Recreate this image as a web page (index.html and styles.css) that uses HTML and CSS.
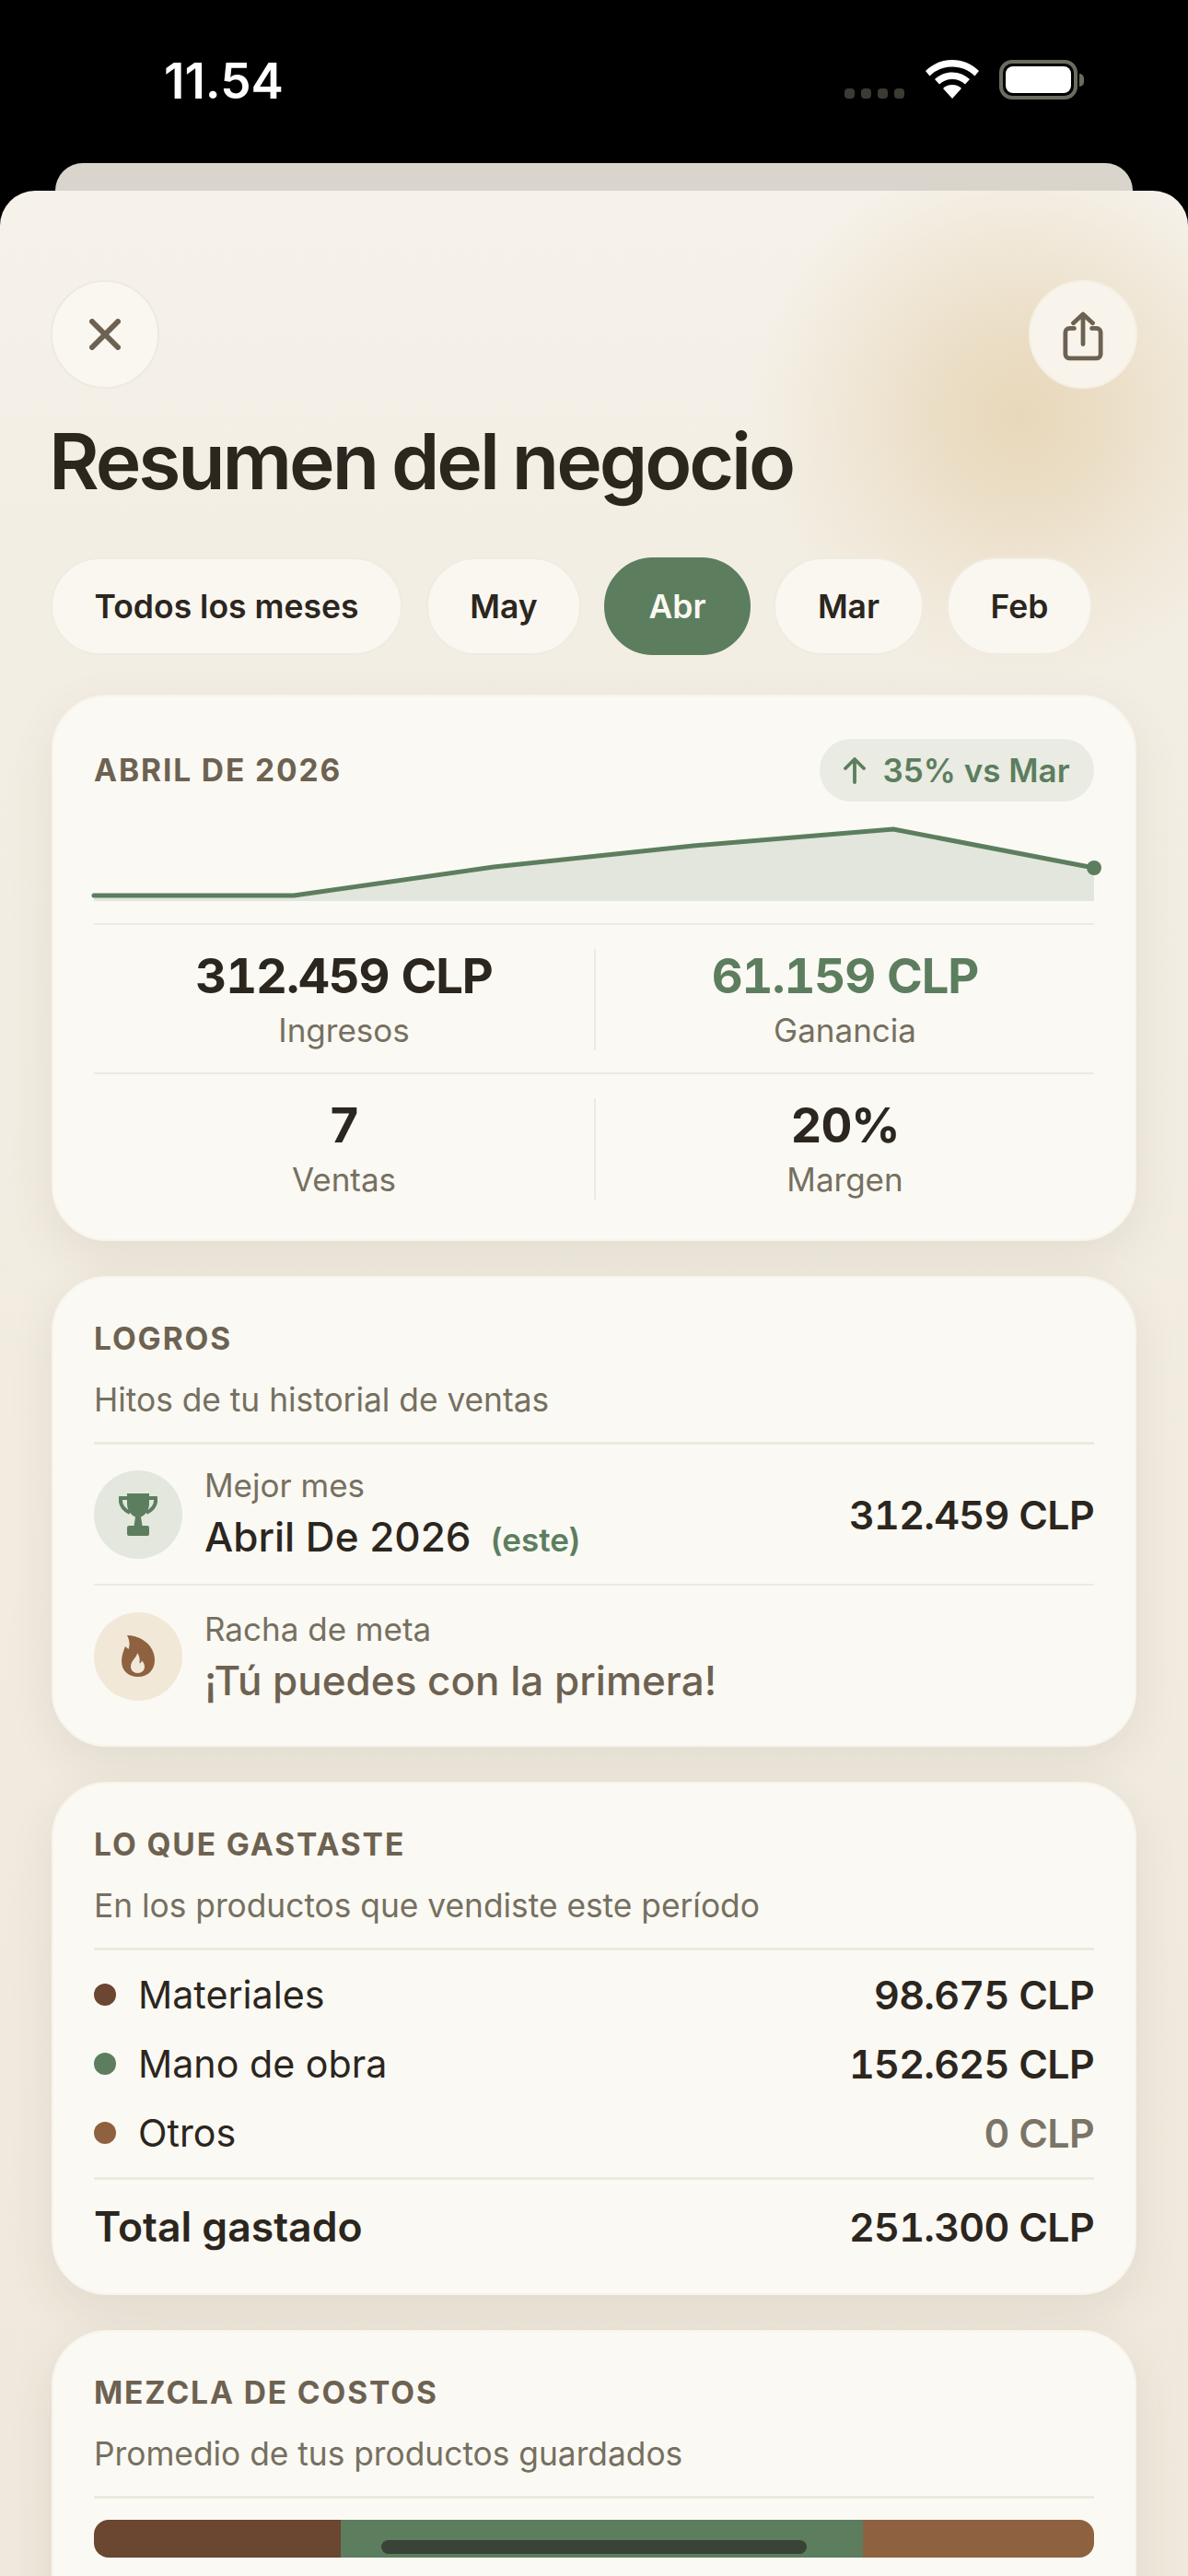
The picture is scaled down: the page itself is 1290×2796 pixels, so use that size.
FILE: index.html
```html
<!DOCTYPE html>
<html lang="es">
<head>
<meta charset="utf-8">
<title>Resumen del negocio</title>
<link rel="stylesheet" href="styles.css">
</head>
<body>
<div class="device">
  <header class="statusbar">
    <span class="time">11.54</span>
    <div class="status-icons">
      <div class="signal"><i></i><i></i><i></i><i></i></div>
      <svg class="wifi" viewBox="0 0 58 42" aria-hidden="true"><path d="M29 0C18 0 8 4 0 12l4.500 5.500C11 11 19.500 7.500 29 7.500s18 3.500 24.500 10L58 12C50 4 40 0 29 0Z" fill="#fff"/><path d="M29 13.500c-7.500 0-14 3-19 7.500l5 5.500c3.500-3.500 8.500-5.500 14-5.500s10.500 2 14 5.500l5-5.500c-5-4.500-11.500-7.500-19-7.500Z" fill="#fff"/><path d="M29 27c-4 0-7.500 1.500-10 4l10 11 10-11c-2.500-2.500-6-4-10-4Z" fill="#fff"/></svg>
      <div class="battery"><div class="battery-body"><div class="battery-fill"></div></div><div class="battery-nub"></div></div>
    </div>
  </header>
  <div class="peek"></div>
  <main class="sheet">
    <div class="topbar">
      <button class="round-btn" aria-label="Cerrar">
        <svg class="ico-close" viewBox="0 0 34 34" aria-hidden="true"><path d="M3 3 31 31M31 3 3 31"/></svg>
      </button>
      <button class="round-btn share" aria-label="Compartir">
        <svg class="ico-share" viewBox="0 0 46 56" aria-hidden="true"><path d="M23 37V4M12 13 23 3l11 10"/><path d="M13 19H7.500A4.500 4.500 0 0 0 3 23.500v25A4.500 4.500 0 0 0 7.500 53h31a4.500 4.500 0 0 0 4.500-4.500v-25A4.500 4.500 0 0 0 38.500 19H33"/></svg>
      </button>
    </div>
    <h1 class="title">Resumen del negocio</h1>
    <nav class="pills">
      <span class="pill p-all">Todos los meses</span>
      <span class="pill p-may">May</span>
      <span class="pill p-abr active">Abr</span>
      <span class="pill p-mar">Mar</span>
      <span class="pill p-feb">Feb</span>
    </nav>

    <section class="card summary">
      <div class="summary-head">
        <h2 class="label">ABRIL DE 2026</h2>
        <span class="badge"><svg class="ico-up" viewBox="0 0 24 30" aria-hidden="true"><path d="M12 28V3M2 13 12 3l10 10"/></svg>35% vs Mar</span>
      </div>
      <svg class="chart" viewBox="0 0 1098 98" aria-hidden="true">
        <path class="chart-area" d="M0 78H217L434 47 651 24 868 6 1086 48V84H0Z"/>
        <path class="chart-line" d="M0 78H217L434 47 651 24 868 6 1086 48"/>
        <circle class="chart-dot" cx="1086" cy="48" r="8"/>
      </svg>
      <div class="stats top-stats">
        <div class="stat"><strong class="stat-value">312.459 CLP</strong><span class="stat-label">Ingresos</span></div>
        <div class="stat"><strong class="stat-value green">61.159 CLP</strong><span class="stat-label">Ganancia</span></div>
      </div>
      <div class="stats">
        <div class="stat"><strong class="stat-value">7</strong><span class="stat-label">Ventas</span></div>
        <div class="stat"><strong class="stat-value">20%</strong><span class="stat-label">Margen</span></div>
      </div>
    </section>

    <section class="card goals">
      <h2 class="label">LOGROS</h2>
      <p class="sub">Hitos de tu historial de ventas</p>
      <div class="achievement first">
        <div class="achv-icon green-bg">
          <svg class="ico-trophy" viewBox="0 0 42 46" aria-hidden="true"><path class="fill" d="M9 0H33V11C33 19 28 24 24 25.500L25.500 35H16.500L18 25.500C14 24 9 19 9 11Z"/><path class="fill" d="M11 35H31A2 2 0 0 1 33 37V44A2 2 0 0 1 31 46H11A2 2 0 0 1 9 44V37A2 2 0 0 1 11 35Z"/><path class="handle" d="M9 5H2C1 13 6 18 12 21M33 5H40C41 13 36 18 30 21"/></svg>
        </div>
        <div class="achv-text"><span class="achv-label">Mejor mes</span><span class="achv-title">Abril De 2026<em class="tag">(este)</em></span></div>
        <strong class="amount">312.459 CLP</strong>
      </div>
      <div class="achievement">
        <div class="achv-icon sand-bg">
          <svg class="ico-flame" viewBox="0 0 36 46" aria-hidden="true"><path d="M6 0C20 0 36 10 36 27 36 38 28 45 18 45 7 45 0 38 0 28 0 22 2 17 4 12L7.500 15C9.500 10 8.500 5 6 0Z" fill="#8e6240"/><path d="M17 19C17 24 10 27 10 34 10 38 13 41 17.500 41 22 41 25 38 25 34 25 31 23.500 29 22 27.500 21.500 29 21 30 19.500 30.500 20 26 19.500 22 17 19Z" fill="#f1e8d8"/></svg>
        </div>
        <div class="achv-text"><span class="achv-label">Racha de meta</span><span class="achv-title muted">¡Tú puedes con la primera!</span></div>
      </div>
    </section>

    <section class="card spent">
      <h2 class="label">LO QUE GASTASTE</h2>
      <p class="sub">En los productos que vendiste este período</p>
      <div class="expenses">
        <div class="expense"><i class="dot brown"></i><span class="expense-name">Materiales</span><strong class="amount">98.675 CLP</strong></div>
        <div class="expense"><i class="dot sage"></i><span class="expense-name">Mano de obra</span><strong class="amount">152.625 CLP</strong></div>
        <div class="expense"><i class="dot copper"></i><span class="expense-name">Otros</span><strong class="amount dim">0 CLP</strong></div>
      </div>
      <div class="total"><strong class="total-name">Total gastado</strong><strong class="amount">251.300 CLP</strong></div>
    </section>

    <section class="card last">
      <h2 class="label">MEZCLA DE COSTOS</h2>
      <p class="sub">Promedio de tus productos guardados</p>
      <div class="mix">
        <div class="mix-seg brown" style="width:24.680%"></div>
        <div class="mix-seg sage" style="width:52.210%"></div>
        <div class="mix-seg copper" style="width:23.110%"></div>
      </div>
    </section>
  </main>
  <div class="home-indicator"></div>
</div>
</body>
</html>
```
FILE: styles.css
```css
* { box-sizing: border-box; }
html, body { margin: 0; padding: 0; background: #000; }
body { font-family: Inter, "Liberation Sans", sans-serif; color: #2a251d; }
.device { position: relative; width: 1290px; height: 2796px; overflow: hidden; background: #000; }

.statusbar { height: 177px; display: flex; justify-content: space-between; padding: 58px 113px 0 178px; }
.time { color: #fff; font-size: 53px; font-weight: 600; line-height: 60px; letter-spacing: 0; }
.status-icons { display: flex; align-items: flex-start; padding-top: 7px; }
.signal { display: flex; gap: 7px; margin: 31px 23px 0 0; }
.signal i { width: 11px; height: 11px; border-radius: 4px; background: #3d3a33; }
.wifi { width: 58px; height: 42px; margin-right: 22px; }
.battery { display: flex; align-items: center; }
.battery-body { width: 85px; height: 43px; border: 4px solid #6b6b60; border-radius: 14px; padding: 3px; }
.battery-fill { width: 100%; height: 100%; background: #fff; border-radius: 8px; }
.battery-nub { width: 5px; height: 14px; background: #6b6b60; border-radius: 0 5px 5px 0; margin-left: 2px; }

.peek { height: 30px; margin: 0 60px; background: #d9d5cd; border-radius: 30px 30px 0 0; }

.sheet {
  height: 2589px; padding: 97px 56px 0; border-radius: 38px 38px 0 0;
  background:
    radial-gradient(circle 290px at 1108px 245px, #e8d8ba 0%, #ebdec6 32%, rgba(238,227,208,.75) 62%, rgba(240,233,218,0) 100%),
    linear-gradient(180deg, #f6f2ea 0%, #f3eee4 15%, #efe8dc 100%);
}

.topbar { display: flex; justify-content: space-between; margin: 0 -1px; }
.round-btn { width: 118px; height: 118px; padding: 0; border-radius: 50%; border: 2px solid #efe9df; background: #faf7f1; display: flex; align-items: center; justify-content: center; }
.share { background: #f8f4ec; border-color: #f5efe3; }
.ico-close { width: 34px; height: 34px; fill: none; stroke: #6d6252; stroke-width: 6; stroke-linecap: round; }
.ico-share { width: 44px; height: 54px; margin-top: 4px; fill: none; stroke: #6d6252; stroke-width: 5; stroke-linecap: round; stroke-linejoin: round; }

.title { margin: 31px 0 0 -3px; font-size: 84px; line-height: 96px; font-weight: 600; letter-spacing: -3.100px; word-spacing: -2px; color: #2b261e; }

.pills { display: flex; margin: 56px 0 0 -1px; }
.pill { height: 106px; display: flex; align-items: center; justify-content: center; border-radius: 53px; background: #faf7f1; border: 2px solid #f0ebe1; font-size: 35.500px; font-weight: 600; color: #2b261e; }
.p-all { width: 382px; margin-right: 26px; }
.p-may { width: 168px; margin-right: 25px; }
.p-abr { width: 159px; margin-right: 25px; }
.p-mar { width: 163px; margin-right: 25px; }
.p-feb { width: 158px; }
.pill.active { background: #5c7e5f; border-color: #5c7e5f; color: #fbf8f1; }

.card { margin-top: 38px; padding: 46px 44px 20px; border-radius: 60px; background: #fbf9f3; border: 2px solid #f8f4ec; box-shadow: 0 16px 50px rgba(90, 70, 40, .09); }
.summary { margin-top: 43px; height: 593px; }
.goals { padding-bottom: 19px; }
.spent { padding-bottom: 21px; }
.last { height: 420px; }

.label { margin: 0; font-size: 33.500px; line-height: 40px; font-weight: 700; letter-spacing: 1.900px; color: #6d6252; }
.sub { margin: 26px 0 0; padding-bottom: 25px; border-bottom: 3px solid #eee9df; font-size: 35.300px; line-height: 41px; color: #757061; }

.summary-head { display: flex; justify-content: space-between; align-items: center; }
.badge { height: 68px; width: 298px; display: flex; align-items: center; justify-content: center; gap: 18px; border-radius: 34px; background: #eaebe2; color: #5c7e5f; font-size: 35px; font-weight: 600; }
.ico-up { width: 24px; height: 30px; fill: none; stroke: #5c7e5f; stroke-width: 3.800; stroke-linecap: round; stroke-linejoin: round; }

.chart { display: block; width: 1098px; height: 98px; margin: 24px 0 10px; overflow: visible; }
.chart-area { fill: #e3e6dc; }
.chart-line { fill: none; stroke: #5c7e5f; stroke-width: 5; stroke-linecap: round; stroke-linejoin: round; }
.chart-dot { fill: #5c7e5f; }

.stats { display: grid; grid-template-columns: 1fr 1fr; padding: 26px 0; border-top: 2px solid #eeeae1; height: 163px; }
.top-stats { height: 162px; }
.stat { display: flex; flex-direction: column; align-items: center; height: 110px; }
.stat + .stat { border-left: 2px solid #eeeae1; }
.stat-value { font-size: 52.500px; line-height: 58px; font-weight: 700; letter-spacing: -1.100px; font-variant-numeric: tabular-nums; color: #2b261e; }
.stat-value.green { color: #5c7e5f; }
.stat-label { margin-top: 8px; font-size: 35px; line-height: 44px; color: #757061; }

.achievement { display: flex; align-items: center; height: 154px; }
.achievement.first { height: 153px; border-bottom: 2px solid #eeeae1; }
.achv-icon { width: 96px; height: 96px; border-radius: 50%; flex: none; display: flex; align-items: center; justify-content: center; margin-right: 24px; }
.green-bg { background: #e3e7dd; }
.sand-bg { background: #f1e8d8; }
.ico-trophy { width: 42px; height: 46px; }
.ico-trophy .fill { fill: #5c7e5f; }
.ico-trophy .handle { fill: none; stroke: #5c7e5f; stroke-width: 4; }
.ico-flame { width: 36px; height: 46px; }
.achv-text { display: flex; flex-direction: column; flex: 1; }
.achv-label { font-size: 35px; line-height: 46px; color: #757061; }
.achv-title { margin-top: 5px; font-size: 44px; line-height: 56px; font-weight: 500; color: #2b261e; }
.achv-title.muted { color: #6d6252; }
.tag { margin-left: 21px; font-size: 35px; font-style: normal; font-weight: 600; color: #5c7e5f; }

.amount { font-size: 43px; line-height: 50px; font-weight: 600; letter-spacing: -.7px; font-variant-numeric: tabular-nums; color: #2b261e; margin-left: auto; }
.amount.dim { color: #7a7566; }

.expenses { padding: 10px 0 11px; }
.expense { display: flex; align-items: center; height: 75px; }
.dot { width: 24px; height: 24px; border-radius: 50%; margin-right: 24px; flex: none; }
.brown { background: #6b4630; }
.sage { background: #5c7e5f; }
.copper { background: #8e6240; }
.expense-name { font-size: 41.200px; line-height: 50px; color: #2b261e; }
.total { display: flex; align-items: center; height: 105px; border-top: 3px solid #eee9df; }
.total-name { font-size: 44.500px; font-weight: 600; color: #2b261e; }

.mix { display: flex; height: 41px; margin-top: 23px; border-radius: 16px; overflow: hidden; }
.mix-seg { height: 100%; }

.home-indicator { position: absolute; left: 414px; top: 2757px; width: 462px; height: 15px; border-radius: 8px; background: rgba(44, 44, 40, .72); }
```
